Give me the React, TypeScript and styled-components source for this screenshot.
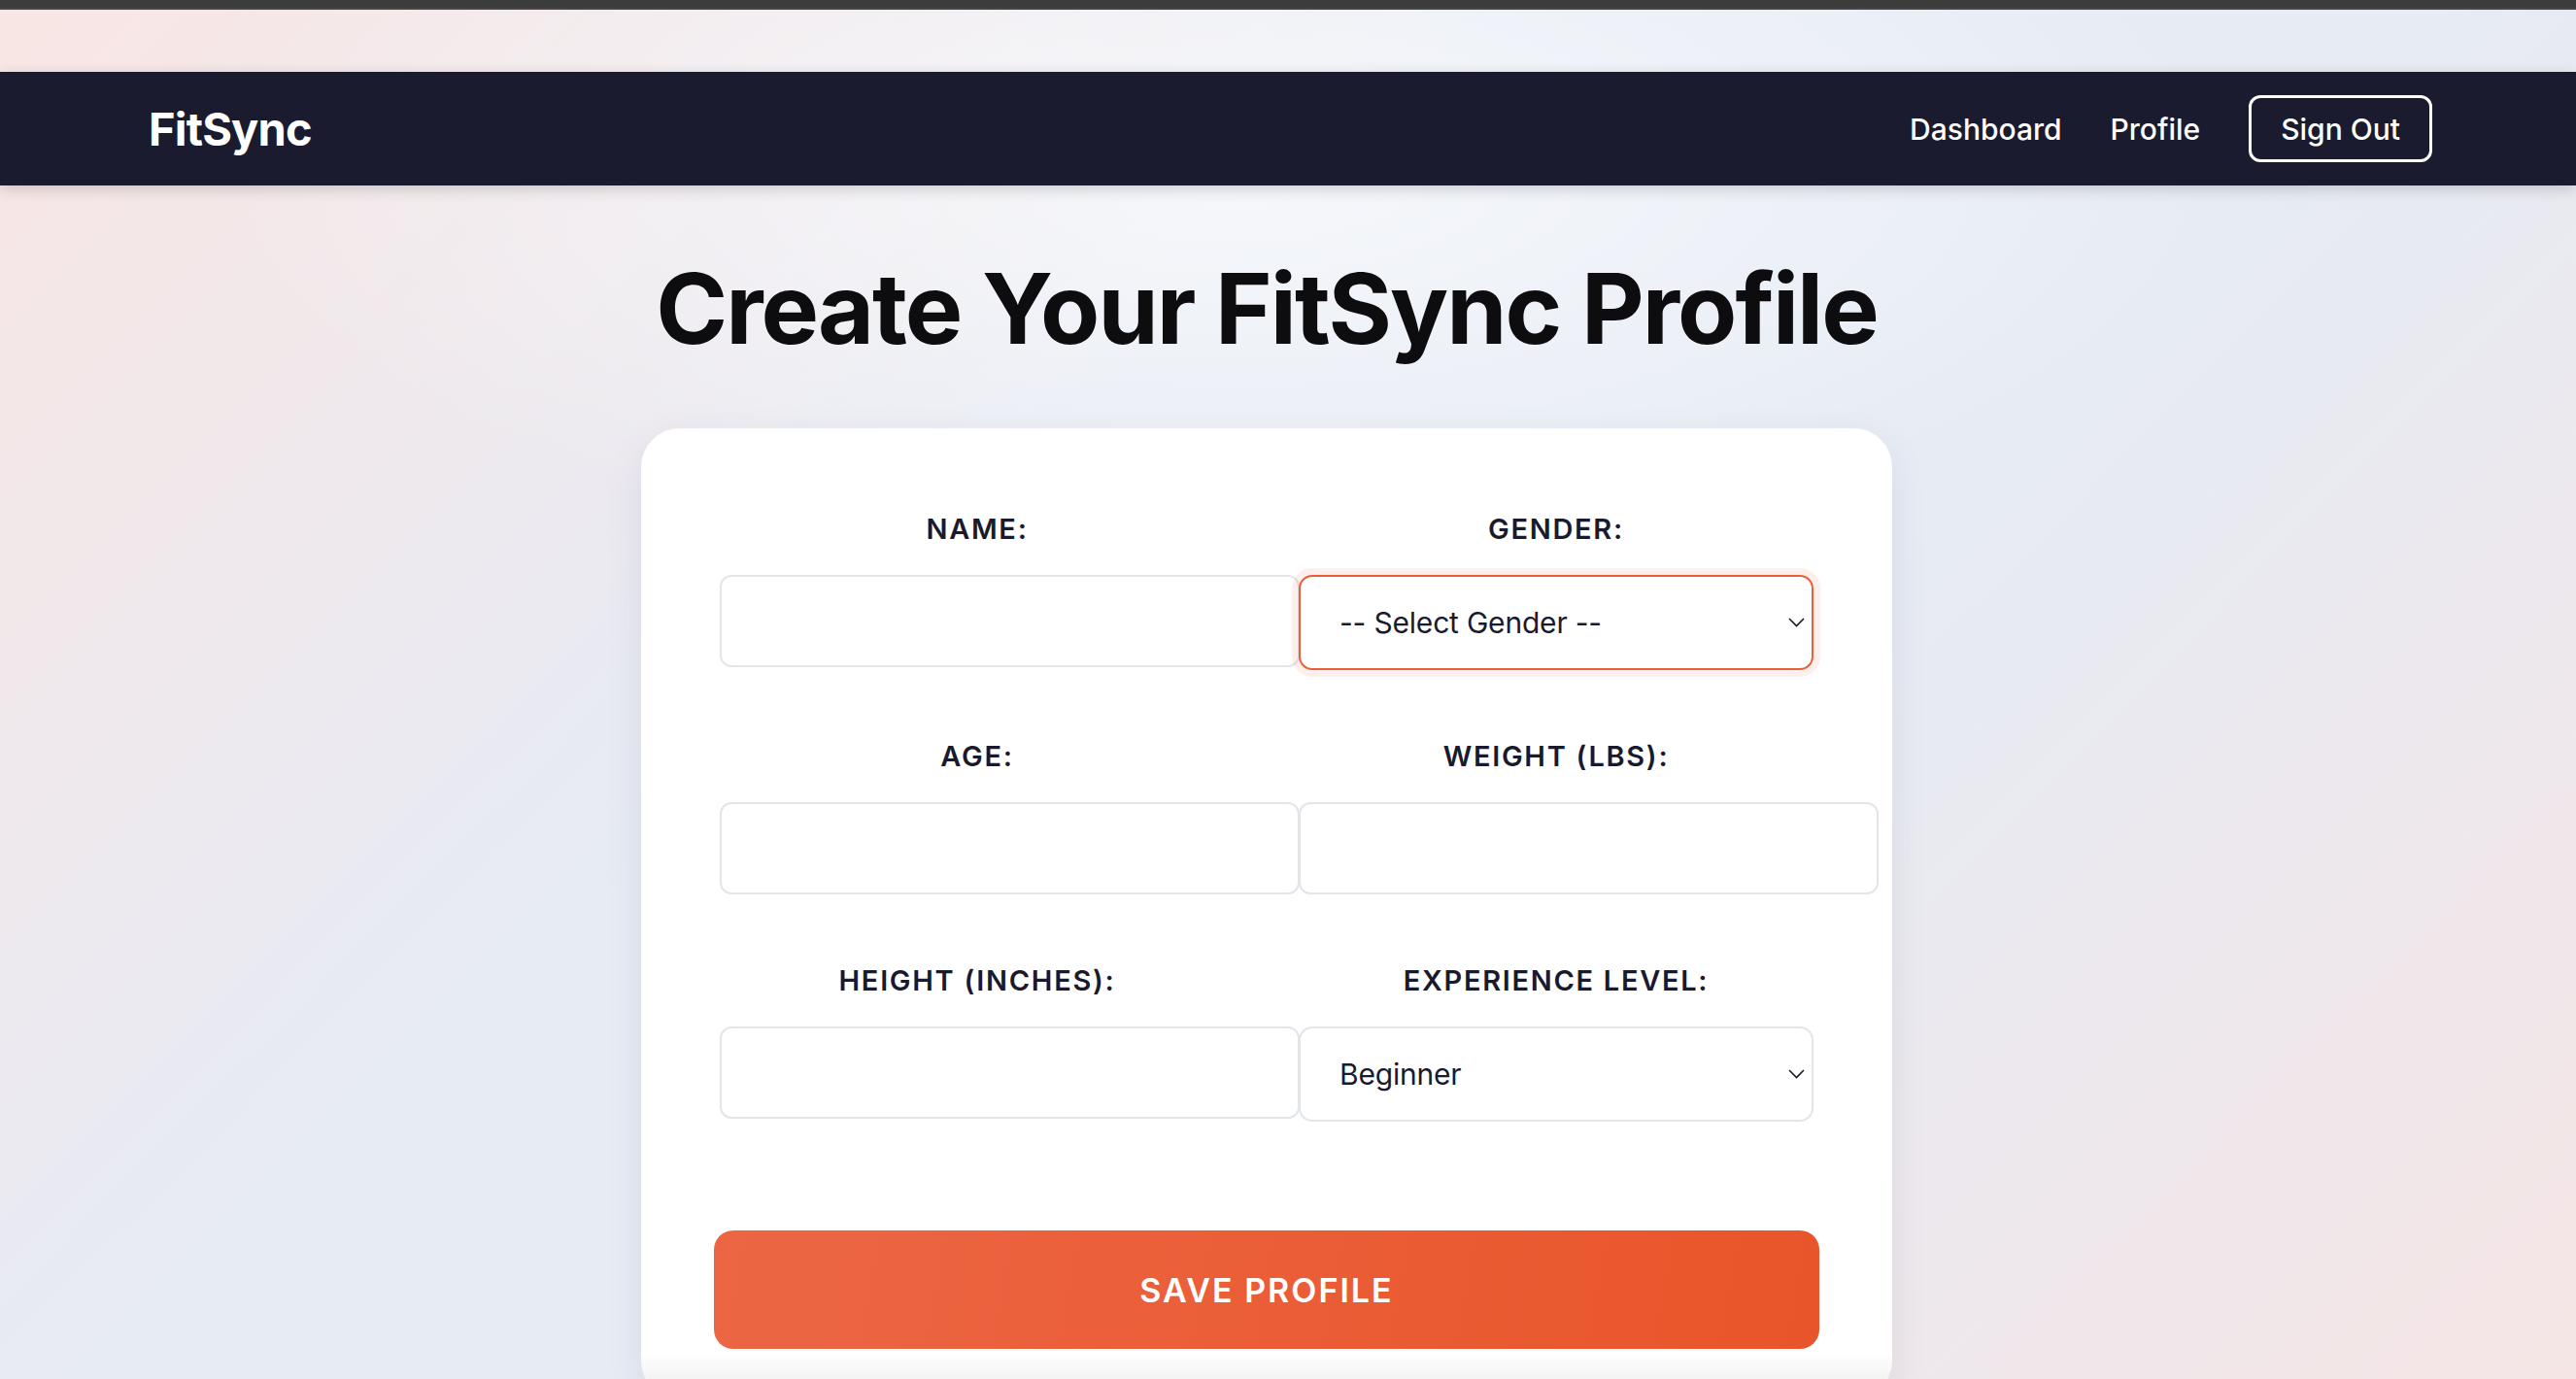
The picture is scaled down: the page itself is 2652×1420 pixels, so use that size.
import React from 'react';
import styled, { createGlobalStyle } from 'styled-components';

const GlobalStyle = createGlobalStyle`
  html, body { margin: 0; padding: 0; overflow: hidden; }
  body { font-family: Inter, "Noto Sans", "Liberation Sans", sans-serif; }
  * { box-sizing: border-box; }
`;

const Page = styled.div`
  height: 100vh;
  overflow: hidden;
  background:
    radial-gradient(ellipse 40% 30% at 48% 12%, rgba(255, 255, 255, 0.65), rgba(255, 255, 255, 0) 100%),
    linear-gradient(135deg, #f9e6e4 0%, #e6ebf4 38%, #e6ebf4 62%, #f5e5e5 100%);
`;

const TopStrip = styled.div`
  height: 10px;
  background: #3c3c3c;
  border-bottom: 2px solid #464646;
`;

const Navbar = styled.nav`
  margin-top: 64px;
  height: 117px;
  background: #1a1b2e;
  display: flex;
  align-items: center;
  justify-content: space-between;
  padding: 0 148px 0 153px;
  box-shadow: 0 4px 14px rgba(0, 0, 0, 0.16);
`;

const Logo = styled.div`
  color: #fff;
  font-size: 47px;
  font-weight: 700;
  letter-spacing: -0.8px;
`;

const NavLinks = styled.div`
  display: flex;
  align-items: center;
  gap: 50px;
`;

const NavLink = styled.a`
  color: #fff;
  font-size: 30px;
  font-weight: 500;
  text-decoration: none;
`;

const SignOut = styled.button`
  height: 69px;
  padding: 0 30px;
  background: transparent;
  border: 3px solid #fff;
  border-radius: 12px;
  color: #fff;
  font-family: inherit;
  font-size: 30px;
  font-weight: 500;
`;

const Main = styled.main`
  display: flex;
  flex-direction: column;
  align-items: center;
  padding-right: 44px;
`;

const Title = styled.h1`
  margin: 66px 0 63px;
  font-size: 100px;
  line-height: 121px;
  font-weight: 700;
  letter-spacing: -2px;
  color: #0d0d0f;
`;

const Card = styled.section`
  width: 1288px;
  min-height: 1000px;
  padding: 86px 81px 0;
  border-radius: 40px;
  background: linear-gradient(180deg, #ffffff 0px, #ffffff 952px, #f2f2f2 982px);
  box-shadow: 0 12px 40px rgba(30, 30, 60, 0.07);
`;

const FormGrid = styled.div`
  display: grid;
  grid-template-columns: 530px 530px;
  column-gap: 66px;
  row-gap: 71px;
`;

const Field = styled.div`
  display: flex;
  flex-direction: column;
  align-items: flex-start;
`;

const Label = styled.label`
  align-self: stretch;
  text-align: center;
  font-size: 29px;
  line-height: 35px;
  font-weight: 600;
  letter-spacing: 1.7px;
  text-transform: uppercase;
  color: #1a1a2e;
  margin-bottom: 30px;
`;

const TextInput = styled.input`
  width: calc(100% + 67px);
  height: 95px;
  padding: 0 30px;
  border: 2px solid #e2e5ea;
  border-radius: 12px;
  background: #fff;
  font-family: inherit;
  font-size: 30px;
  color: #1a1a2e;
  outline: none;
`;

const SelectWrap = styled.div`
  position: relative;
  width: 100%;
`;

const Select = styled.select<{ $focused?: boolean }>`
  appearance: none;
  -webkit-appearance: none;
  width: 100%;
  height: 98px;
  padding: 0 40px;
  border: 2px solid ${(p) => (p.$focused ? '#ea5f3a' : '#e2e5ea')};
  border-radius: 14px;
  background: #fff;
  font-family: inherit;
  font-size: 30px;
  letter-spacing: -0.2px;
  color: #1a1a2e;
  outline: none;
  box-shadow: ${(p) => (p.$focused ? '0 0 0 7px rgba(234, 95, 58, 0.1)' : 'none')};
`;

const Chevron = styled.svg`
  position: absolute;
  right: 9px;
  top: 50%;
  transform: translateY(-50%);
  pointer-events: none;
`;

const SaveButton = styled.button`
  display: block;
  width: calc(100% + 12px);
  margin: 112px -6px 0;
  height: 122px;
  border: none;
  border-radius: 20px;
  background: linear-gradient(100deg, #ec6644 0%, #e9552a 100%);
  color: #fff;
  font-family: inherit;
  font-size: 34px;
  font-weight: 600;
  letter-spacing: 2px;
  text-transform: uppercase;
`;

const ChevronIcon = () => (
  <Chevron width="17" height="10" viewBox="0 0 17 10">
    <polyline points="1,1 8.5,8.5 16,1" fill="none" stroke="#1a1a2e" strokeWidth="1.6" />
  </Chevron>
);

const SelectField = ({
  label,
  options,
  focused,
}: {
  label: string;
  options: string[];
  focused?: boolean;
}) => (
  <Field>
    <Label>{label}</Label>
    <SelectWrap>
      <Select $focused={focused} defaultValue={options[0]}>
        {options.map((o) => (
          <option key={o} value={o}>
            {o}
          </option>
        ))}
      </Select>
      <ChevronIcon />
    </SelectWrap>
  </Field>
);

const InputField = ({ label, type }: { label: string; type?: string }) => (
  <Field>
    <Label>{label}</Label>
    <TextInput type={type || 'text'} />
  </Field>
);

export default function App() {
  return (
    <>
      <GlobalStyle />
      <Page>
        <TopStrip />
        <Navbar>
          <Logo>FitSync</Logo>
          <NavLinks>
            <NavLink href="#">Dashboard</NavLink>
            <NavLink href="#">Profile</NavLink>
            <SignOut>Sign Out</SignOut>
          </NavLinks>
        </Navbar>
        <Main>
          <Title>Create Your FitSync Profile</Title>
          <Card>
            <FormGrid>
              <InputField label="Name:" />
              <SelectField
                label="Gender:"
                focused
                options={['-- Select Gender --', 'Male', 'Female', 'Other']}
              />
              <InputField label="Age:" type="number" />
              <InputField label="Weight (lbs):" type="number" />
              <InputField label="Height (inches):" type="number" />
              <SelectField label="Experience Level:" options={['Beginner', 'Intermediate', 'Advanced']} />
            </FormGrid>
            <SaveButton>Save Profile</SaveButton>
          </Card>
        </Main>
      </Page>
    </>
  );
}
